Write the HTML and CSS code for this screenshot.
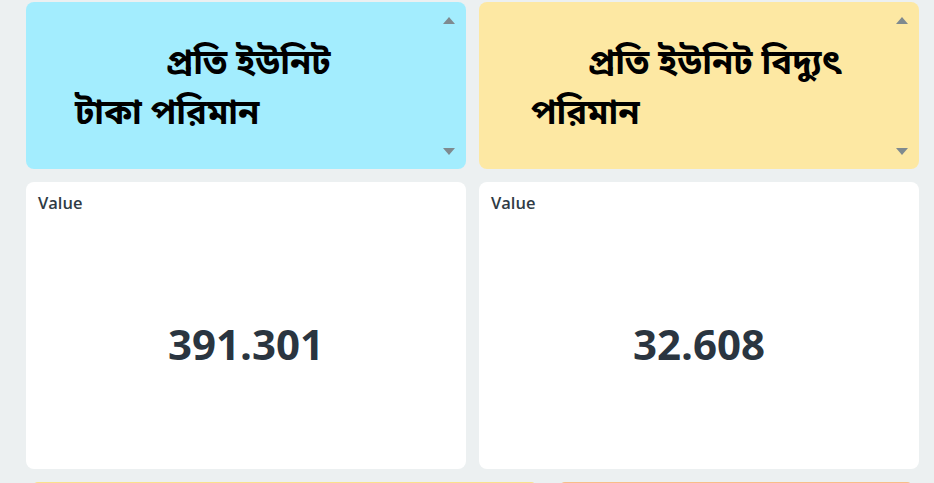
FILE: index.html
```html
<!DOCTYPE html>
<html lang="bn">
<head>
<meta charset="utf-8">
<title>Dashboard</title>
<link rel="stylesheet" href="styles.css">
</head>
<body>
<main class="board">
  <section class="grid">
    <div class="title-card cyan">
      <p class="title t-left">প্রতি ইউনিট<br>টাকা পরিমান</p>
      <span class="arrow up"></span>
      <span class="arrow down"></span>
    </div>
    <div class="title-card yellow">
      <p class="title t-right">প্রতি ইউনিট বিদ্যুৎ<br>পরিমান</p>
      <span class="arrow up"></span>
      <span class="arrow down"></span>
    </div>
    <div class="value-card">
      <div class="label">Value</div>
      <div class="number">391.301</div>
    </div>
    <div class="value-card">
      <div class="label">Value</div>
      <div class="number">32.608</div>
    </div>
  </section>
  <section class="next-row">
    <div class="next yellow-2"></div>
    <div class="next orange"></div>
  </section>
</main>
</body>
</html>
```
FILE: styles.css
```css
html, body {
  margin: 0;
  padding: 0;
  background: #ecf0f1;
}
.board {
  width: 934px;
  height: 483px;
  padding-top: 2px;
  box-sizing: border-box;
  overflow: hidden;
}
.grid {
  display: grid;
  grid-template-columns: 440px 440px;
  grid-template-rows: 167px 287px;
  column-gap: 13px;
  row-gap: 13px;
  padding-left: 26px;
}
.title-card {
  position: relative;
  border-radius: 8px;
  display: flex;
  align-items: flex-start;
}
.cyan { background: #a3edfe; }
.yellow { background: #fde8a3; }
.title {
  margin: 0;
  font-family: "Noto Sans Bengali", "Lohit Bengali", "FreeSans", "Noto Sans", sans-serif;
  font-weight: 700;
  font-size: 34.5px;
  line-height: 50px;
  color: #000;
}
.t-left {
  padding: 38px 0 0 49px;
  text-indent: 91px;
}
.t-right {
  padding: 38px 0 0 52px;
  text-indent: 57px;
}
.arrow {
  position: absolute;
  right: 11px;
  width: 0;
  height: 0;
  border-left: 6px solid transparent;
  border-right: 6px solid transparent;
}
.arrow.up {
  top: 15px;
  border-bottom: 7px solid #7f8a8f;
}
.arrow.down {
  bottom: 14px;
  border-top: 7px solid #7f8a8f;
}
.value-card {
  background: #fff;
  border-radius: 8px;
  display: flex;
  flex-direction: column;
  font-family: "Open Sans", sans-serif;
  color: #2a3540;
}
.label {
  padding: 10px 0 0 12px;
  font-size: 16.5px;
  font-weight: 600;
  line-height: 22px;
  color: #2f3b45;
}
.number {
  flex: 1;
  display: flex;
  align-items: center;
  justify-content: center;
  font-size: 42px;
  font-weight: 700;
  color: #2a3540;
  padding-top: 4px;
}
.next-row {
  display: grid;
  grid-template-columns: 505px 354px;
  column-gap: 22px;
  padding-left: 32px;
  margin-top: 13px;
}
.next {
  height: 20px;
  border-radius: 6px 6px 0 0;
}
.yellow-2 { background: #fde8a3; border-top: 1px solid #fbe08c; }
.orange { background: #fcc89a; border-top: 1px solid #f9bd88; }
```
